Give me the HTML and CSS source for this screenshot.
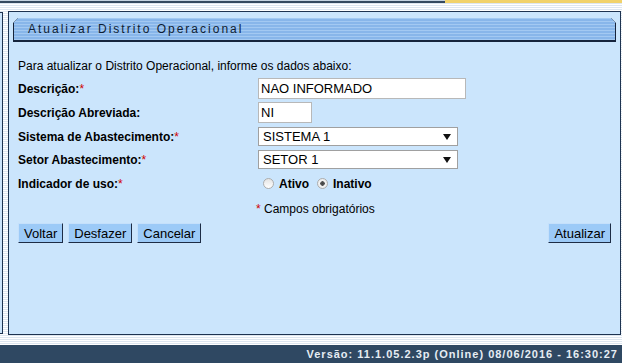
FILE: index.html
```html
<!DOCTYPE html>
<html lang="pt-BR">
<head>
    <meta charset="UTF-8">
    <title>Atualizar Distrito Operacional</title>
    <link rel="stylesheet" href="styles.css">
</head>
<body>
    <div class="topo"><div class="topo-linha"></div><div class="topo-amarelo"></div></div>

    <div class="meio">
        <div class="lateral"></div>

        <div class="painel">
            <!-- Titulo -->
            <div class="titulo">
                <div class="titulo-fundo">Atualizar Distrito Operacional</div>
            </div>

            <form class="form">
                <p class="intro">Para atualizar o Distrito Operacional, informe os dados abaixo:</p>

                <div class="campos">
                    <label class="rotulo">Descrição:<span class="obr">*</span></label>
                    <div><input type="text" class="txt txt-longo" value="NAO INFORMADO"></div>

                    <label class="rotulo">Descrição Abreviada:</label>
                    <div><input type="text" class="txt txt-curto" value="NI"></div>

                    <label class="rotulo">Sistema de Abastecimento:<span class="obr">*</span></label>
                    <div class="sel"><select><option>SISTEMA 1</option></select></div>

                    <label class="rotulo">Setor Abastecimento:<span class="obr">*</span></label>
                    <div class="sel"><select><option>SETOR 1</option></select></div>

                    <label class="rotulo">Indicador de uso:<span class="obr">*</span></label>
                    <div class="radios">
                        <input type="radio" name="uso" id="ativo"><label for="ativo">Ativo</label>
                        <input type="radio" name="uso" id="inativo" checked><label for="inativo">Inativo</label>
                    </div>

                    <span></span>
                    <div class="obrigatorios"><span class="obr">*</span> Campos obrigatórios</div>
                </div>

                <!-- Botoes -->
                <div class="botoes">
                    <button type="button" class="bt">Voltar</button>
                    <button type="button" class="bt">Desfazer</button>
                    <button type="button" class="bt">Cancelar</button>
                    <button type="button" class="bt bt-direita">Atualizar</button>
                </div>
            </form>
        </div>
    </div>

    <div class="rodape">Versão: 11.1.05.2.3p (Online) 08/06/2016 - 16:30:27</div>
</body>
</html>
```

FILE: styles.css
```css
body {
    margin: 0;
    width: 622px;
    height: 363px;
    overflow: hidden;
    font-family: "Liberation Sans", Arial, sans-serif;
    font-size: 12px;
    color: #000;
    background: repeating-linear-gradient(180deg, #ffffff 0, #ffffff 1px, #dde6f0 1px, #dde6f0 2px);
}
.topo {
    display: flex;
    height: 3px;
    background: #c5d3e0;
}
.topo-linha {
    flex: 1;
    margin-top: 1px;
    height: 2px;
    background: #34495f;
}
.topo-amarelo {
    width: 177px;
    height: 3px;
    background: #f1d26a;
}
.meio {
    display: flex;
    margin-top: 8px;
    height: 324px;
}
.lateral {
    width: 2px;
    margin-top: 1px;
    margin-bottom: 1px;
    background: #cce4fa;
    border: 1px solid #1e3350;
    border-left: none;
}
.painel {
    margin-left: 5px;
    width: 611px;
    height: 322px;
    background: #cbe5fc;
    border: 1px solid #1e3350;
}
.titulo {
    margin: 6px 0 0 4px;
    width: 603px;
    height: 24px;
    background: #16243c;
    clip-path: polygon(5px 0, calc(100% - 5px) 0, 100% 5px, 100% 100%, 0 100%, 0 5px);
}
.titulo-fundo {
    margin: 1px;
    height: 22px;
    line-height: 22px;
    padding-left: 14px;
    background: repeating-linear-gradient(180deg, #a3c9f2 0, #a3c9f2 1px, #88b6ea 1px, #88b6ea 3px);
    clip-path: polygon(4px 0, calc(100% - 4px) 0, 100% 4px, 100% 100%, 0 100%, 0 4px);
    font-size: 12px;
    letter-spacing: 2px;
    color: #0f1d33;
}
.form {
    padding: 0 9px 0 9px;
}
.intro {
    margin: 17px 0 4px 0;
    line-height: 14px;
}
.campos {
    display: grid;
    grid-template-columns: 240px auto;
    grid-template-rows: 23px 25px 23px 23px 25px 26px;
    align-items: center;
}
.rotulo {
    font-weight: bold;
}
.obr {
    color: #d00000;
    font-weight: normal;
}
.txt {
    box-sizing: border-box;
    height: 21px;
    padding: 0 2px;
    border: 1px solid #b8b8b8;
    font-family: "Liberation Sans", Arial, sans-serif;
    font-size: 13px;
    color: #000;
    background: #fff;
}
.txt-longo {
    width: 208px;
}
.txt-curto {
    width: 54px;
}
.sel {
    position: relative;
    width: 200px;
}
.sel select {
    box-sizing: border-box;
    width: 200px;
    height: 19px;
    padding: 0 0 0 4px;
    border: 1px solid #a0a0a0;
    background: #fff;
    font-family: "Liberation Sans", Arial, sans-serif;
    font-size: 13px;
    color: #000;
    appearance: none;
    -webkit-appearance: none;
}
.sel::after {
    content: "";
    position: absolute;
    right: 7px;
    top: 7px;
    border-left: 4px solid transparent;
    border-right: 4px solid transparent;
    border-top: 6px solid #111;
}
.radios {
    display: flex;
    align-items: center;
    padding-left: 5px;
    font-weight: bold;
}
.radios input {
    appearance: none;
    -webkit-appearance: none;
    box-sizing: border-box;
    width: 11px;
    height: 11px;
    margin: 0 5px 0 0;
    border: 1px solid #adadad;
    border-radius: 50%;
    background: linear-gradient(180deg, #e4e4e4, #ffffff);
}
.radios input:checked {
    background: radial-gradient(circle, #444 0, #555 2px, #f2f2f2 2.5px, #e8e8e8 100%);
}
.radios label {
    margin-right: 8px;
}
.obrigatorios {
    margin-left: -2px;
}
.botoes {
    display: flex;
    gap: 5px;
    margin-top: 1px;
    padding-left: 0;
}
.bt {
    height: 20px;
    padding: 0 5px;
    font-family: "Liberation Sans", Arial, sans-serif;
    font-size: 13px;
    color: #000;
    background: #9ccaf7;
    border: 1px solid #1d2c45;
    border-top-color: #c5e0fb;
    border-left-color: #c5e0fb;
    border-radius: 0;
}
.bt-direita {
    margin-left: auto;
}
.rodape {
    margin-top: 10px;
    height: 18px;
    line-height: 18px;
    background: #2f4862;
    color: #e6edf4;
    text-align: right;
    padding-right: 4px;
    font-size: 11px;
    font-weight: bold;
    letter-spacing: 1px;
}
```
